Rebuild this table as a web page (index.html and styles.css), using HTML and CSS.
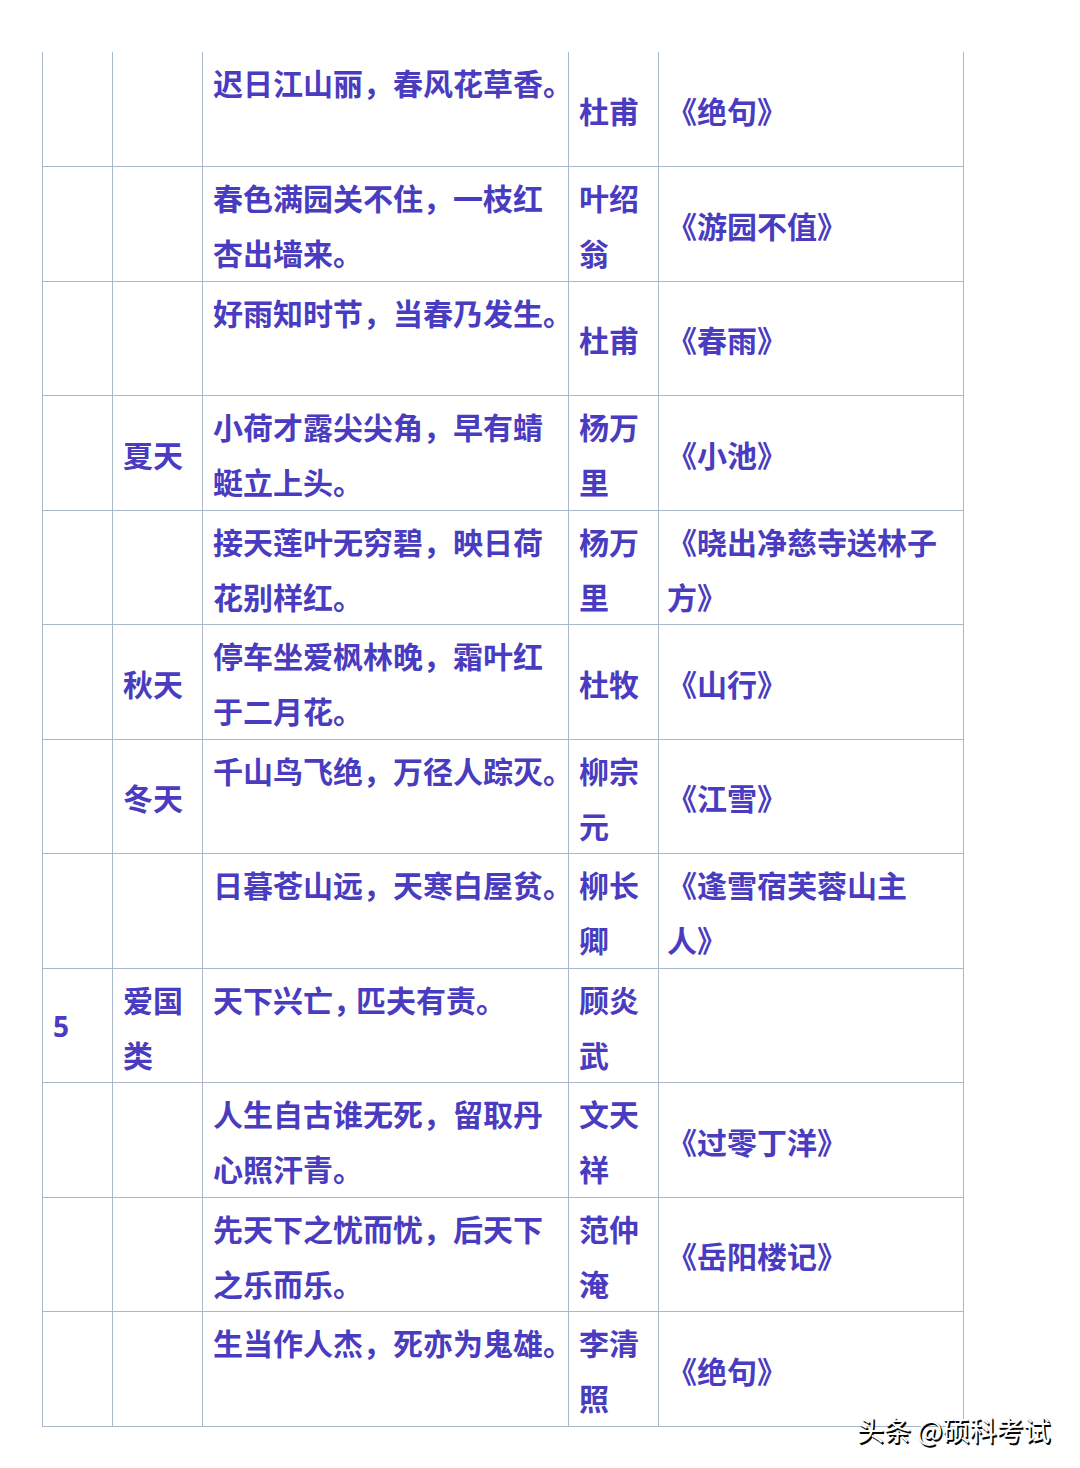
FILE: index.html
```html
<!DOCTYPE html>
<html lang="zh-CN">
<head>
<meta charset="utf-8">
<title>诗句表</title>
<link rel="stylesheet" href="styles.css">
</head>
<body>
<div class="page">
  <table class="poems">
    <colgroup>
      <col class="c-no"><col class="c-cat"><col class="c-line"><col class="c-author"><col class="c-title">
    </colgroup>
    <tbody>
      <tr><td></td><td></td><td class="line">迟日江山丽，春风花草香。</td><td>杜甫</td><td class="title">《绝句》</td></tr>
      <tr><td></td><td></td><td class="line">春色满园关不住，一枝红<br>杏出墙来。</td><td>叶绍<br>翁</td><td class="title">《游园不值》</td></tr>
      <tr><td></td><td></td><td class="line">好雨知时节，当春乃发生。</td><td>杜甫</td><td class="title">《春雨》</td></tr>
      <tr><td></td><td>夏天</td><td class="line">小荷才露尖尖角，早有蜻<br>蜓立上头。</td><td>杨万<br>里</td><td class="title">《小池》</td></tr>
      <tr><td></td><td></td><td class="line">接天莲叶无穷碧，映日荷<br>花别样红。</td><td>杨万<br>里</td><td class="title">《晓出净慈寺送林子<br>方》</td></tr>
      <tr><td></td><td>秋天</td><td class="line">停车坐爱枫林晚，霜叶红<br>于二月花。</td><td>杜牧</td><td class="title">《山行》</td></tr>
      <tr><td></td><td>冬天</td><td class="line">千山鸟飞绝，万径人踪灭。</td><td>柳宗<br>元</td><td class="title">《江雪》</td></tr>
      <tr><td></td><td></td><td class="line">日暮苍山远，天寒白屋贫。</td><td>柳长<br>卿</td><td class="title">《逢雪宿芙蓉山主<br>人》</td></tr>
      <tr><td class="num">5</td><td>爱国<br>类</td><td class="line">天下兴亡<span class="narrow">，</span>匹夫有责。</td><td>顾炎<br>武</td><td class="title"></td></tr>
      <tr><td></td><td></td><td class="line">人生自古谁无死，留取丹<br>心照汗青。</td><td>文天<br>祥</td><td class="title">《过零丁洋》</td></tr>
      <tr><td></td><td></td><td class="line">先天下之忧而忧，后天下<br>之乐而乐。</td><td>范仲<br>淹</td><td class="title">《岳阳楼记》</td></tr>
      <tr><td></td><td></td><td class="line">生当作人杰，死亦为鬼雄。</td><td>李清<br>照</td><td class="title">《绝句》</td></tr>
    </tbody>
  </table>
  <div class="watermark">头条 @硕科考试</div>
</div>
</body>
</html>
```
FILE: styles.css
```css
html, body {
  margin: 0;
  padding: 0;
  background: #ffffff;
}

.page {
  position: relative;
  width: 1080px;
  height: 1468px;
  padding: 52px 0 0 42px;
  box-sizing: border-box;
  font-family: "Noto Sans CJK SC", "Noto Sans", sans-serif;
}

.poems {
  border-collapse: collapse;
  table-layout: fixed;
  width: 921px;
  color: #4a3cc0;
  font-size: 30px;
  font-weight: 700;
  line-height: 55.25px;
}

.poems tr {
  height: 114.5px;
}

.c-no { width: 70px; }
.c-cat { width: 90px; }
.c-line { width: 366px; }
.c-author { width: 90px; }
.c-title { width: 305px; }

.poems td {
  border: 1px solid #a9b8c9;
  border-top: none;
  padding: 3px 0 0 10px;
  vertical-align: middle;
  white-space: nowrap;
  overflow: visible;
}

.poems tr + tr td {
  border-top: 1px solid #a9b8c9;
}

.poems td.line {
  vertical-align: top;
}

.poems td.title {
  padding-left: 8px;
}

.poems td.num {
  font-family: "Open Sans", "Noto Sans", sans-serif;
  font-size: 28px;
}

.narrow {
  letter-spacing: -7px;
}

.watermark {
  position: absolute;
  left: 857px;
  top: 1411px;
  color: #ffffff;
  font-size: 27px;
  font-weight: 400;
  line-height: 38px;
  white-space: nowrap;
  text-shadow: 1.5px 1.5px 0 #000, 1px 1px 1px #222;
}
```
